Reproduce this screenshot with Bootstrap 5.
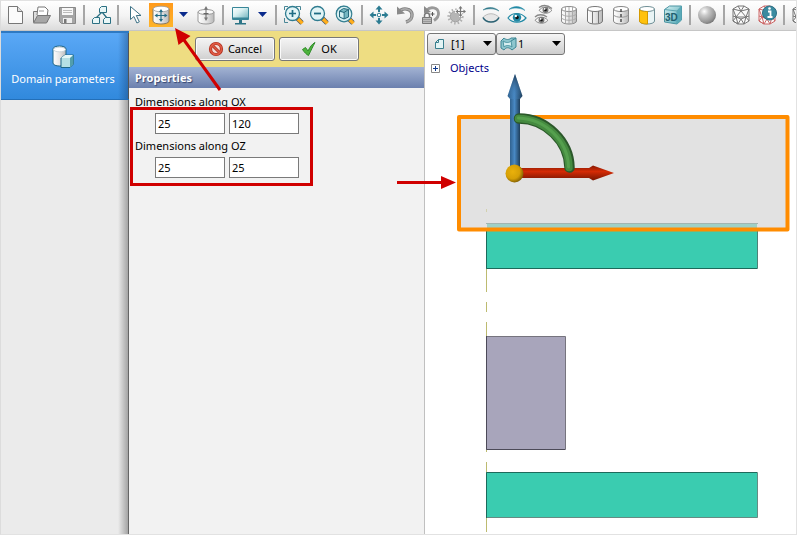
<!DOCTYPE html>
<html lang="en">
<head>
<meta charset="utf-8">
<meta name="viewport" content="width=device-width, initial-scale=1">
<title>Domain parameters</title>
<link href="https://cdn.jsdelivr.net/npm/bootstrap@5.3.0/dist/css/bootstrap.min.css" rel="stylesheet">
<style>
body { font: 11px/16px "Noto Sans", "Open Sans", sans-serif; color: #000; background: #fff; }
.app { border: 1px solid #e2e2e2; border-left-color: #dcdcdc; }
.tools { height: 30px; padding: 2px 0 0 1px; background: linear-gradient(#fff, #f4f4f4 50%, #dcdcdc); border-bottom: 1px solid #c6c6c6; }
.tool { width: 26px; height: 24px; padding: 0 1px; border: 0; background: none; flex: none; }
.tool svg, .drop svg { display: block; }
.tool.picked svg { background: linear-gradient(#ff9a1c, #ffb429); }
.drop { width: 19px; height: 24px; padding: 9px 5px; border: 0; background: none; flex: none; }
.rule { width: 2px; height: 20px; margin: 2px 3px; background: #a6a6a6; flex: none; }
.side { width: 128px; background: linear-gradient(90deg, #ebebeb 117px, #a4a4a4 127px, #666 127px); }
.side-item { height: 69px; padding: 12px 4px 0 0; color: #fff; border-top: 2px solid #2e79c2; border-bottom: 1px solid #236fb8;
  background: linear-gradient(90deg, transparent 117px, rgba(20,60,110,.4) 127px, #555 127px), linear-gradient(#5aa8f6, #3189dd); }
.side-item:hover { color: #fff; }
.side-item span { line-height: 20px; }
.props { width: 295px; background: #f2f2f2; }
.actions { height: 36px; padding: 0 66px; background: #eedd82; }
.act { width: 80px; height: 24px; border: 1px solid #777; border-radius: 3px; background: linear-gradient(#f4f4f4, #e4e4e4 50%, #cfcfcf); box-shadow: inset 0 0 0 1px #fafafa; padding: 0; color: #000; }
.props-head { height: 21px; padding: 2px 6px; color: #fff; font: bold 11px/17px "Noto Sans", "Open Sans", sans-serif; text-shadow: 1px 1px 1px #35456f; background: linear-gradient(#a3b3d3, #6b80ae); }
.fields { padding: 5px 6px; }
.fields legend { font-size: 11px; line-height: 17px; margin: 0 0 3px; }
.fields fieldset { margin-bottom: 3px; }
.pair { padding-left: 20px; }
.num { width: 70px; height: 21px; border: 1px solid #7a7a7a; padding: 0 2px; line-height: 19px; }
.view { border-left: 1px solid #c0c0c0; background: #fff; min-width: 0; }
.combo { width: 69px; height: 22px; border: 1px solid #777; border-radius: 3px; background: linear-gradient(#f6f6f6, #cdcdcd); padding: 0 3px; }
.combo select { appearance: none; border: 0; background: none; padding: 0; width: 36px; line-height: 18px; flex: 1; min-width: 0; }
.combos { padding: 2px 2px 0; }
.tree { padding: 5px 6px; gap: 10px; color: #00008b; }
.tree button { width: 9px; height: 9px; padding: 0; border: 0; background: none; }
.tree svg, .combo svg { display: block; flex: none; }
.scene, .marks { position: absolute; left: 0; top: 0; overflow: visible; pointer-events: none; }
</style>
<script src="https://cdn.jsdelivr.net/npm/bootstrap@5.3.0/dist/js/bootstrap.bundle.min.js"></script>
</head>
<body>
<svg width="0" height="0" class="position-absolute" aria-hidden="true">
  <defs>
    <linearGradient id="gCyl"><stop offset="0" stop-color="#fff"/><stop offset=".5" stop-color="#e6e6e6"/><stop offset="1" stop-color="#b8b8b8"/></linearGradient>
    <linearGradient id="gScr" x2="1" y2="1"><stop offset="0" stop-color="#fff"/><stop offset=".4" stop-color="#d8f0f1"/><stop offset="1" stop-color="#68adb8"/></linearGradient>
    <radialGradient id="gBall" cx=".35" cy=".3" r=".8"><stop offset="0" stop-color="#fff"/><stop offset=".3" stop-color="#c9c9c9"/><stop offset=".75" stop-color="#949494"/><stop offset="1" stop-color="#666"/></radialGradient>
    <linearGradient id="gCube" x2="1" y2="1"><stop offset="0" stop-color="#d5f1f2"/><stop offset="1" stop-color="#4fa6b4"/></linearGradient>
    <symbol id="lens" viewBox="0 0 24 24"><path d="M15 15l5 5" stroke="#4c5660" stroke-width="4.6"/><path d="M16 16l4.400 4.400" stroke="#ffae1c" stroke-width="3.400"/><circle cx="10.500" cy="10.500" r="7" fill="#e2f4f6" stroke="#2f7c90" stroke-width="1.300"/></symbol>
    <symbol id="eye" viewBox="0 0 24 24"><path d="M3 16c4-6 13-6 18 0-5 6-14 5-18 0z" fill="#f6f6f6" stroke="currentColor" stroke-width="1.200"/><circle cx="12" cy="15.500" r="4.200" fill="currentColor"/><circle cx="12" cy="15.500" r="1.800" fill="#111"/><circle cx="10.800" cy="14" r="1.200" fill="#fff"/></symbol>
    <symbol id="mesh" viewBox="0 0 24 24"><g stroke-width="1" stroke-linejoin="round" fill="none"><path d="M4 6l5-3h6l5 3v12l-5 3H9l-5-3z" fill="#fafafa" stroke="currentColor"/><path d="M4 6l8 2 8-2M9 3l3 5 3-5M4 6l3 8 5-6 5 6 3-8M4 13l3 1 5 2 5-2 3-1M4 18l3-4 2 7 3-5 3 5 2-7 3 4M4 18l5 3M7 14h10" stroke="currentColor"/></g></symbol>
  </defs>
</svg>

<main class="app position-relative d-flex flex-column min-vh-100 overflow-hidden">
  <nav class="tools d-flex align-items-start" aria-label="Main tools">
    <button class="tool" type="button" aria-label="New"><svg width="24" height="24"><path d="M5.500 3.500h9l5 5v12h-14z" fill="#fbfbfb" stroke="#777"/><path d="M14.500 3.500v5h5" fill="#ddd" stroke="#777"/></svg></button>
    <button class="tool" type="button" aria-label="Open"><svg width="24" height="24" stroke-linejoin="round"><path d="M4.500 19V8.500h5l2 2h7V19" fill="#ddd" stroke="#777"/><path d="M8 12l1-8h7l3 3-1 7" fill="#fff" stroke="#777"/><path d="M10 8h5" stroke="#999"/><path d="M4.500 20l4-7.500h13l-4 7.500z" fill="#a6a6a6" stroke="#777"/></svg></button>
    <button class="tool" type="button" aria-label="Save"><svg width="24" height="24"><path d="M4.500 4.500h16v16h-14l-2-2z" fill="#a5a5a5" stroke="#888"/><path d="M7 5h11v7H7z" fill="#f7f7f7"/><path d="M8 7.500h9M8 9.500h9" stroke="#bbb"/><path d="M8 15h9v5H8z" fill="#eee"/><path d="M9 16h2.500v4H9z" fill="#777"/></svg></button>
    <span class="rule"></span>
    <button class="tool" type="button" aria-label="Structure"><svg width="24" height="24"><path d="M13 9L7 15M13 9l5 6" fill="none" stroke="#2b7083" stroke-width="1.300"/><g fill="#e8f6f7" stroke="#2b7083"><path d="M12.500 3.500h5v6h-7v-4z"/><path d="M5.500 14.500h5v6h-7v-4z"/><path d="M16.500 14.500h5v6h-7v-4z"/></g></svg></button>
    <span class="rule"></span>
    <button class="tool" type="button" aria-label="Select"><svg width="24" height="24"><path d="M7.500 3.500v13l3.400-3 3 6.500 2.400-1.200-3-6.300h4.700z" fill="#fff" stroke="#3c7186" stroke-linejoin="round"/></svg></button>
    <button class="tool picked" type="button" aria-label="Edit domain" aria-pressed="true"><svg width="24" height="24"><path d="M4 6v12c0 4 16 4 16 0V6z" fill="url(#gCyl)" stroke="#8a7a60"/><ellipse cx="12" cy="6" rx="8" ry="2.800" fill="#fff" stroke="#999" stroke-width=".8"/><path d="M12 8v9M7 12.500h10" stroke="#246d86" stroke-width="1.200"/><path d="M12 6l2 3h-4zM12 19l2-3h-4zM5.500 12.500l3-2v4zM18.500 12.500l-3-2v4z" fill="#246d86"/></svg></button>
    <button class="drop" type="button" aria-label="Edit modes"><svg width="9" height="6"><path d="M0 0h9L4.500 5z" fill="#0a2b8c"/></svg></button>
    <button class="tool" type="button" aria-label="Origin"><svg width="24" height="24"><path d="M4 9v9c0 4 16 4 16 0V9" fill="url(#gCyl)" stroke="#999"/><ellipse cx="12" cy="9" rx="8" ry="2.500" fill="#fafafa" stroke="#999"/><path d="M12 5v11M9.500 10.500h5" stroke="#666"/><path d="M12 3l2 3.500h-4zM12 18l2-3.500h-4z" fill="#777"/></svg></button>
    <span class="rule"></span>
    <button class="tool" type="button" aria-label="Display"><svg width="24" height="24"><path d="M4.500 4.500h16v12h-16z" fill="url(#gScr)" stroke="#388698"/><path d="M5 15.500h15" stroke="#388698" stroke-width="2"/><path d="M11 17h3v3h4v1.500H7V20h4z" fill="#2b7486"/></svg></button>
    <button class="drop" type="button" aria-label="Display modes"><svg width="9" height="6"><path d="M0 0h9L4.500 5z" fill="#0a2b8c"/></svg></button>
    <span class="rule"></span>
    <button class="tool" type="button" aria-label="Zoom in"><svg width="24" height="24"><path d="M3.500 7V3.500H7M15 3.500h4.500V7M3.500 15v4.500H7" fill="none" stroke="#4a8796"/><use href="#lens" x="1" y="0"/><path d="M11.500 7v7M8 10.500h7" stroke="#1f6c84" stroke-width="1.700"/></svg></button>
    <button class="tool" type="button" aria-label="Zoom out"><svg width="24" height="24"><use href="#lens"/><path d="M7 10.500h7" stroke="#1f6c84" stroke-width="1.800"/></svg></button>
    <button class="tool" type="button" aria-label="Zoom to fit"><svg width="24" height="24"><use href="#lens"/><circle cx="11" cy="11" r="7.800" fill="#d8f0f2" stroke="#337f91" stroke-width="1.200"/><path d="M6.500 8l4-2.500 5 1V14l-4.500 2-4.500-2z" fill="#75b7c2" stroke="#27697c"/><path d="M6.500 8l4.500 1.500V16M11 9.500l4.500-3" stroke="#27697c" fill="none"/><path d="M7 9l3.500 1v5L7 13.500z" fill="#d5eff1"/></svg></button>
    <span class="rule"></span>
    <button class="tool" type="button" aria-label="Pan"><svg width="24" height="24"><path d="M12 4v5M12 15v5M4 12h5M15 12h5" stroke="#2b7b91" stroke-width="2"/><path d="M12 2.500l3.500 4h-7zM12 21.500l3.500-4h-7zM2.500 12l4-3.500v7zM21.500 12l-4-3.500v7z" fill="#2b7b91"/><circle cx="12" cy="12" r="1.800" fill="#fff" stroke="#2b7b91"/></svg></button>
    <button class="tool" type="button" aria-label="Rotate"><svg width="24" height="24"><path d="M6.500 8.500c3-4 12-3.500 12.500 3 .3 4-2.500 6.500-6 7.500" fill="none" stroke="#7c7c7c" stroke-width="3.400"/><path d="M6.500 8.500c3-4 12-3.500 12.500 3 .3 4-2.500 6.500-6 7.500" fill="none" stroke="#aaa" stroke-width="1.800"/><path d="M4 3.500v8l8-1z" fill="#8a8a8a"/></svg></button>
    <button class="tool" type="button" aria-label="Lock rotation"><svg width="24" height="24"><path d="M8 7c3-3.500 11-3 11.500 3 .3 3-1.500 5.500-4.500 7.500" fill="none" stroke="#999" stroke-width="2.800"/><path d="M5 3v7l7-1z" fill="#8a8a8a"/><path d="M13.500 9v4M11.500 11h4" stroke="#555"/><path d="M5.500 14v-1.500c0-3.500 5-3.500 5 0V14" fill="none" stroke="#777" stroke-width="1.500"/><path d="M3.500 14.500h9v6h-9z" fill="#bbb" stroke="#777"/><path d="M4 16.500h8M4 18.500h8" stroke="#999"/></svg></button>
    <button class="tool" type="button" aria-label="Move light"><svg width="24" height="24"><circle cx="10.500" cy="13.500" r="6.800" fill="none" stroke="#b0b0b0" stroke-width="2.600" stroke-dasharray="1.500 2"/><circle cx="10.500" cy="13.500" r="5.300" fill="#b5b5b5" stroke="#a0a0a0"/><path d="M15.500 3v11M10 8.500h11" stroke="#f7f7f7" stroke-width="3"/><path d="M15.500 5v8M12 8.500h8" stroke="#777" stroke-width="1.200"/><path d="M15.500 3l2 2.500h-4zM15.500 14l2-2.500h-4zM10.500 8.500l2.500-2v4zM21 8.500l-2.500-2v4z" fill="#777"/></svg></button>
    <span class="rule"></span>
    <button class="tool" type="button" aria-label="Hide"><svg width="24" height="24"><path d="M4 7c5-4 12-3 16 1-5-3-11-2.500-16-1z" fill="#2c7688" stroke="#2c7688" stroke-width=".5"/><path d="M4 14.500c4-5 12-5 16 0-3 6-12 6-16 0z" fill="#e6e6e6" stroke="#bbb"/><path d="M4 14.500c3 6 13 6 16 0" fill="none" stroke="#2b6274" stroke-width="1.600"/></svg></button>
    <button class="tool" type="button" aria-label="Show"><svg width="24" height="24" color="#2189a5"><path d="M4 6.500c5-4.500 12-3.500 16 1-5-3-11-3-16-1z" fill="#2189a5" stroke="#2189a5" stroke-width=".5"/><use href="#eye" y="-1"/></svg></button>
    <button class="tool" type="button" aria-label="Invert visibility"><svg width="24" height="24" color="#777"><use href="#eye" x="6" y="-4" width="17" height="17"/><use href="#eye" x="2" y="6" width="17" height="17"/><path d="M8 4.500c4-3 9-2 13 1M4 14c3-3 8-3 12 0" fill="none" stroke="#888" stroke-width="1.300"/></svg></button>
    <button class="tool" type="button" aria-label="Wireframe"><svg width="24" height="24"><path d="M4.500 6v12c0 4 15 4 15 0V6" fill="url(#gCyl)" stroke="#888"/><ellipse cx="12" cy="6" rx="7.500" ry="2.500" fill="#fff" stroke="#888"/><path d="M8.500 4v16.500M12 3.500V21M15.500 4v16.500M4.500 11c3 3 12 3 15 0M4.500 15c3 3 12 3 15 0" fill="none" stroke="#aaa"/></svg></button>
    <button class="tool" type="button" aria-label="Edges"><svg width="24" height="24"><path d="M4.500 6v12c0 4 15 4 15 0V6" fill="url(#gCyl)" stroke="#777"/><ellipse cx="12" cy="6" rx="7.500" ry="2.500" fill="#fff" stroke="#777"/><path d="M9.500 8.500v12M15.500 8v12" stroke="#777"/></svg></button>
    <button class="tool" type="button" aria-label="Axis"><svg width="24" height="24"><path d="M4.500 6v12c0 4 15 4 15 0V6" fill="url(#gCyl)" stroke="#888"/><ellipse cx="12" cy="6" rx="7.500" ry="2.500" fill="#fff" stroke="#888"/><path d="M4.500 12c3 3 12 3 15 0" fill="none" stroke="#999"/><path d="M12 6v14" stroke="#444" stroke-width="1.400" stroke-dasharray="3 2"/></svg></button>
    <button class="tool" type="button" aria-label="Section"><svg width="24" height="24"><path d="M4.500 6v12c0 4 15 4 15 0V6" fill="#e9f4f5" stroke="#6f8f96"/><ellipse cx="12" cy="6" rx="7.500" ry="2.500" fill="#fff" stroke="#6f8f96"/><path d="M4.500 6c0 2 4 2.500 8 2.500V21c-4 0-8-1-8-3z" fill="#ffc20e" stroke="#d59a00"/></svg></button>
    <button class="tool" type="button" aria-label="3D view"><svg width="24" height="24"><path d="M3.500 6.500l5-3.500h12v14l-4.500 4-12.500-2z" fill="url(#gCube)" stroke="#4b94a2" stroke-linejoin="round"/><path d="M3.500 6.500L16 8v13M16 8l4.500-5" fill="none" stroke="#5ba3af"/><path d="M16 8l4.500-5v14L16 21z" fill="#5aaab8"/><text x="4" y="18" font-family="Liberation Sans, sans-serif" font-size="10" font-weight="bold" fill="#1f5f70">3D</text></svg></button>
    <span class="rule"></span>
    <button class="tool" type="button" aria-label="Shading"><svg width="24" height="24"><circle cx="12" cy="12" r="9" fill="url(#gBall)"/></svg></button>
    <span class="rule"></span>
    <button class="tool" type="button" aria-label="Mesh"><svg width="24" height="24" color="#777"><use href="#mesh"/></svg></button>
    <button class="tool" type="button" aria-label="Mesh info"><svg width="24" height="24" color="#c66"><use href="#mesh"/><circle cx="14.500" cy="10" r="7" fill="#3b8ba0" stroke="#2b6f84"/><path d="M13 8.500h2.500v5M12.500 14h5" stroke="#fff" stroke-width="1.800" fill="none"/><circle cx="14.500" cy="5.500" r="1.300" fill="#fff"/></svg></button>
    <span class="rule"></span>
    <button class="tool" type="button" aria-label="Mesh tools"><svg width="24" height="24" color="#777"><use href="#mesh"/></svg></button>
  </nav>

  <div class="d-flex flex-grow-1">
    <aside class="side flex-shrink-0">
      <a class="side-item d-flex flex-column align-items-center text-decoration-none" href="#domain">
        <svg width="24" height="24" aria-hidden="true"><path d="M2 4v14c0 4 13 4 13 0V4c0-4-13-4-13 0z" fill="url(#gCyl)" stroke="#1e6688"/><ellipse cx="8.500" cy="4.500" rx="6" ry="2.300" fill="#fff" stroke="#b7c9d1" stroke-width=".7"/><path d="M10 13l4-3h8.500v9L19 22.500h-9z" fill="#b6e0e4" stroke="#1e6688" stroke-linejoin="round"/><path d="M10 13l4-3h8l-3 3z" fill="#e5f7f7"/><path d="M19 13l3.500-3v9L19 22.500z" fill="#529ead"/></svg>
        <span>Domain parameters</span>
      </a>
    </aside>

    <section class="props flex-shrink-0" id="domain">
      <div class="actions d-flex align-items-center gap-1 text-nowrap">
        <button class="act d-flex align-items-center justify-content-center gap-1 flex-shrink-0" type="button"><svg width="16" height="16" aria-hidden="true"><circle cx="8" cy="8" r="5.500" fill="#f3dcd6" stroke="#a92a19" stroke-width="3.200"/><path d="M4 4l8 8" stroke="#a92a19" stroke-width="3"/><circle cx="8" cy="8" r="5.500" fill="none" stroke="#df5943" stroke-width="1.800"/><path d="M4 4l8 8" stroke="#df5943" stroke-width="1.600"/></svg>Cancel</button>
        <button class="act d-flex align-items-center justify-content-center gap-1 flex-shrink-0" type="button"><svg width="16" height="16" aria-hidden="true"><path d="M1.500 8.500l3-2 2.500 3.500c2-4 4-7 7-8.500-2 3.500-4 8-6.500 13-2-1-4-3-6-6z" fill="#4db33b" stroke="#2d8a27" stroke-linejoin="round"/></svg>OK</button>
      </div>
      <h2 class="props-head mb-0">Properties</h2>
      <form class="fields">
        <fieldset>
          <legend>Dimensions along OX</legend>
          <div class="pair d-flex gap-1"><input class="num" value="25" aria-label="OX minimum"><input class="num" value="120" aria-label="OX maximum"></div>
        </fieldset>
        <fieldset>
          <legend>Dimensions along OZ</legend>
          <div class="pair d-flex gap-1"><input class="num" value="25" aria-label="OZ minimum"><input class="num" value="25" aria-label="OZ maximum"></div>
        </fieldset>
      </form>
    </section>

    <section class="view position-relative flex-grow-1">
      <div class="combos d-flex">
        <label class="combo d-flex align-items-center"><svg width="20" height="16" aria-hidden="true"><path d="M4.500 12.500v-6l3-3h5v9z" fill="#e3f4f5" stroke="#397f8e"/><path d="M4.500 6.500h3v-3" fill="none" stroke="#397f8e"/></svg><select aria-label="Sheet"><option>[1]</option></select><svg width="9" height="6" aria-hidden="true"><path d="M0 0h9L4.500 5z"/></svg></label>
        <label class="combo d-flex align-items-center"><svg width="18" height="16" aria-hidden="true"><path d="M1 5l3-3c2 2 5 2 7 0h5v9l-4 3c-3-3-6-3-8 0l-3-2z" fill="#8dc6ce" stroke="#3c8593" stroke-linejoin="round"/><path d="M3 5c3 2 6 2 8 0l1 6c-3-2-6-2-8 0z" fill="#d6eff1" stroke="#4a93a0"/><path d="M11 5l5-3" stroke="#3c8593"/></svg><select aria-label="Surface"><option>1</option></select><svg width="9" height="6" aria-hidden="true"><path d="M0 0h9L4.500 5z"/></svg></label>
      </div>
      <div class="tree d-flex align-items-center">
        <button type="button" aria-label="Expand"><svg width="9" height="9"><path d="M.5.5h8v8h-8z" fill="#fff" stroke="#888"/><path d="M2 4.500h5M4.500 2v5" stroke="#123a8c"/></svg></button>
        <span>Objects</span>
      </div>
      <svg class="scene" width="371" height="503" viewBox="425 31 371 503" role="img" aria-label="Domain cross-section">
        <defs>
          <linearGradient id="gBlue"><stop offset="0" stop-color="#31628f"/><stop offset=".45" stop-color="#4888c3"/><stop offset="1" stop-color="#1e3e5b"/></linearGradient>
          <linearGradient id="gTip" x2="0" y2="1"><stop offset="0" stop-color="#14283c" stop-opacity=".8"/><stop offset="1" stop-color="#4888c3" stop-opacity="0"/></linearGradient>
          <linearGradient id="gRed" x2="0" y2="1"><stop offset="0" stop-color="#861a04"/><stop offset=".4" stop-color="#d52b05"/><stop offset="1" stop-color="#761602"/></linearGradient>
          <radialGradient id="gGold" cx=".4" cy=".4" r=".65"><stop offset="0" stop-color="#eab10b"/><stop offset=".6" stop-color="#d6a006"/><stop offset="1" stop-color="#7a5a03"/></radialGradient>
        </defs>
        <path d="M486.500 222v70M486.500 302v10M486.500 322v130M486.500 462v70" stroke="#bdbb70"/>
        <path d="M486.500 223.500h271v45h-271z" fill="#3accb0" stroke="#4f8177"/>
        <path d="M486.500 223v45.500H757" fill="none" stroke="#1d6a5b"/>
        <path d="M486.500 336.500h79v113h-79z" fill="#a8a5bb" stroke="#76747e"/>
        <path d="M486.500 336v113.500H565" fill="none" stroke="#4c4a58"/>
        <path d="M486.500 472.500h271v45h-271z" fill="#3accb0" stroke="#668b83"/>
        <path d="M486.500 518v-45.500H757" fill="none" stroke="#1d6a5b"/>
        <path d="M459 117h328v112H459z" fill="#e2e2e2"/>
        <path d="M487 224h270v5H487z" fill="#9fd0c5"/><path d="M486 223.500h272" stroke="#a2b5b1"/><path d="M486.500 209v3" stroke="#d2d1ae"/>
        <path d="M459 117h328.500v112.500H459z" fill="none" stroke="#ff8c00" stroke-width="4" stroke-linejoin="round"/>
        <path d="M510 97h10v70h-10z" fill="url(#gBlue)"/>
        <path d="M515 74l7.500 22-2.500 3h-10l-2.500-3z" fill="url(#gBlue)"/><path d="M515 74l7.500 22h-15z" fill="url(#gTip)"/>
        <path d="M518 168h71l4-2.500 21 7.500-21 7.500-4-2.500h-71z" fill="url(#gRed)"/>
        <g fill="none" stroke-linecap="round"><path d="M519 118.500c27 0 50 23 50.500 49" stroke="#2b582a" stroke-width="10.500"/><path d="M518.500 118.500c27 0.500 50 23 50.500 49" stroke="#458a40" stroke-width="7.500"/><path d="M518.500 118c27 1 49.500 23 50 49" stroke="#55a04e" stroke-width="3"/></g>
        <circle cx="514.500" cy="173.500" r="9" fill="url(#gGold)"/>
      </svg>
    </section>
  </div>

  <svg class="marks" width="797" height="535" viewBox="1 1 797 535" aria-hidden="true">
    <path d="M131.500 108.500h180v76h-180zM220 90l-36-50M397 182.500h48" stroke="#d00000" stroke-width="3" fill="none"/>
    <path d="M175 28l15.500 8-12 9zM456 182.500l-15 6.500v-13z" fill="#d00000"/>
  </svg>
</main>
</body>
</html>
